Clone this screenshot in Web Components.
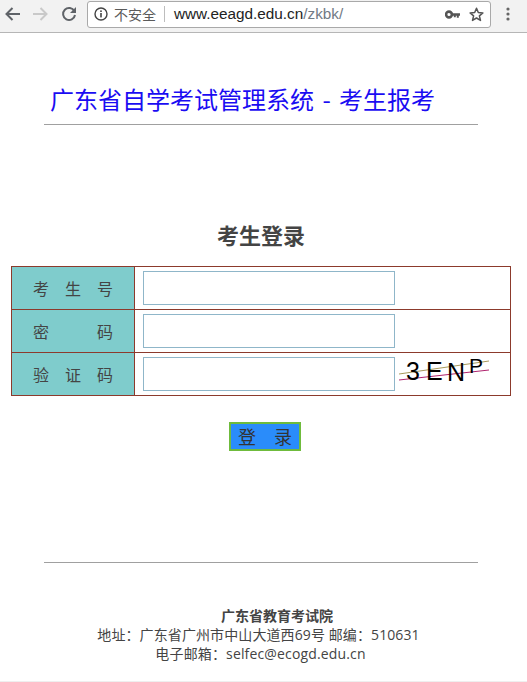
<!DOCTYPE html>
<html lang="zh">
<head>
<meta charset="utf-8">
<title>广东省自学考试管理系统</title>
<style>
  html, body { margin: 0; padding: 0; background: #fff; overflow: hidden; }
  body { font-family: "Noto Sans CJK SC", "Liberation Sans", sans-serif; color: #444; width: 527px; height: 682px; box-sizing: border-box; border-bottom: 1px solid #efefef; }
</style>
</head>
<body>
<browser-bar host-name="www.eeagd.edu.cn" path="/zkbk/"></browser-bar>
<page-header>广东省自学考试管理系统 - 考生报考</page-header>
<login-form>
  <form-row label="考生号"><text-box></text-box></form-row>
  <form-row label="密码"><text-box></text-box></form-row>
  <form-row label="验证码"><text-box></text-box><captcha-image></captcha-image></form-row>
</login-form>
<page-footer></page-footer>

<script>
  class BrowserBar extends HTMLElement{
    constructor(){
      super()
      this.attachShadow({mode:'open'}).innerHTML = `
      <style>
        :host{ display: flex; align-items: center; box-sizing: border-box; height: 33px; background: #f2f2f2; border-bottom: 1px solid #b6b6b6; padding: 0 0 4px 0; }
        svg{ display: block; flex: none; }
        .nav{ display: flex; align-items: center; gap: 11px; padding-left: 4px; width: 87px; box-sizing: border-box; flex: none; }
        .reload{ margin-left: 1px; }
        .omnibox{ display: flex; align-items: center; width: 404px; height: 27px; box-sizing: border-box; background: #fff; border: 1px solid #a9a9a9; border-radius: 3px; font-size: 14px; flex: none; }
        .info{ margin-left: 6px; }
        .warn{ margin-left: 6px; font-size: 14px; color: #5a5a5a; width: 45px; white-space: nowrap; }
        .sep{ width: 1px; height: 16px; background: #bdbdbd; margin: 0 9px 0 5px; flex: none; }
        .url{ flex: 1; font-family: "Liberation Sans", sans-serif; font-size: 15.3px; color: #222; white-space: nowrap; }
        .url span{ color: #717a85; }
        .actions{ display: flex; align-items: center; gap: 9px; padding-right: 6px; }
        .menu{ margin-left: 15px; }
      </style>
      <div class="nav">
        <svg width="17" height="16" viewBox="0 0 17 16"><path d="M16 8H3M8.5 2 2.5 8l6 6" fill="none" stroke="#5f6368" stroke-width="2"/></svg>
        <svg width="17" height="16" viewBox="0 0 17 16"><path d="M1 8h13M8.5 2l6 6-6 6" fill="none" stroke="#c9c9c9" stroke-width="2"/></svg>
        <svg class="reload" width="16" height="16" viewBox="0 0 16 16"><path d="M13.4 5.2A6 6 0 1 0 14 9" fill="none" stroke="#5f6368" stroke-width="2"/><path d="M15 1v6H9z" fill="#5f6368"/></svg>
      </div>
      <div class="omnibox">
        <svg class="info" width="14" height="14" viewBox="0 0 14 14"><circle cx="7" cy="7" r="6" fill="none" stroke="#444" stroke-width="1.4"/><rect x="6.2" y="6" width="1.6" height="4.4" fill="#444"/><rect x="6.2" y="3.4" width="1.6" height="1.6" fill="#444"/></svg>
        <span class="warn">不安全</span>
        <span class="sep"></span>
        <span class="url">${this.getAttribute('host-name')}<span>${this.getAttribute('path')}</span></span>
        <div class="actions">
          <svg width="15" height="9" viewBox="0 0 15 9"><circle cx="4" cy="4.5" r="2.9" fill="none" stroke="#555" stroke-width="2.6"/><path d="M7 3.2h8v2.6h-1.2v2h-2v-2h-1v1.4H8.8V5.8H7z" fill="#555"/></svg>
          <svg width="15" height="15" viewBox="0 0 15 15"><path d="M7.5 1.3 9.3 5.5l4.6.4-3.5 3 1.1 4.5-4-2.4-4 2.4 1.1-4.5-3.5-3 4.6-.4z" fill="none" stroke="#555" stroke-width="1.5" stroke-linejoin="round"/></svg>
        </div>
      </div>
      <svg class="menu" width="4" height="14" viewBox="0 0 4 14"><circle cx="2" cy="2" r="1.6" fill="#666"/><circle cx="2" cy="7" r="1.6" fill="#666"/><circle cx="2" cy="12" r="1.6" fill="#666"/></svg>
      `
    }
  }

  class PageHeader extends HTMLElement{
    constructor(){
      super()
      this.attachShadow({mode:'open'}).innerHTML = `
      <style>
        :host{ display: block; margin: 0 49px 0 44px; padding-top: 48px; height: 43px; border-bottom: 1px solid #a0a0a0; }
        h1{ margin: 0 0 0 6px; font: 400 24px/36px "Noto Sans CJK SC", "Liberation Sans", sans-serif; color: #1a0cf2; white-space: nowrap; word-spacing: 3px; }
      </style>
      <h1><slot></slot></h1>
      `
    }
  }

  class LoginForm extends HTMLElement{
    constructor(){
      super()
      this.attachShadow({mode:'open'}).innerHTML = `
      <style>
        :host{ display: block; padding: 93px 16px 0 11px; }
        h2{ margin: 0 0 16px 0; font: 700 22px/32px "Noto Sans CJK SC", "Liberation Sans", sans-serif; color: #444; text-align: center; }
        .grid{ border: 1px solid #8c3a2c; }
        .btn-row{ display: flex; justify-content: center; margin-top: 26px; padding-left: 8px; }
        button{ width: 72px; height: 29px; padding: 0; box-sizing: border-box; background: #2a8cfa; border: 2px solid #6fbb3c; color: #333; font: 400 18px/25px "Noto Sans CJK SC", sans-serif; white-space: pre; }
      </style>
      <h2>考生登录</h2>
      <div class="grid"><slot></slot></div>
      <div class="btn-row"><button type="button">登　录</button></div>
      `
    }
  }

  class FormRow extends HTMLElement{
    constructor(){
      super()
      const chars = [...this.getAttribute('label')].map( c => `<span>${c}</span>` ).join('')
      this.attachShadow({mode:'open'}).innerHTML = `
      <style>
        :host{ display: grid; grid-template-columns: 123px 1fr; height: 43px; box-sizing: border-box; border-bottom: 1px solid #8c3a2c; }
        :host(:last-child){ border-bottom: 0; height: 42px; }
        .label{ display: flex; justify-content: space-between; align-items: center; padding: 0 21px; background: #7fcccc; border-right: 1px solid #8c3a2c; font-size: 16px; color: #444; }
        .field{ display: flex; align-items: center; padding-left: 8px; }
      </style>
      <div class="label">${chars}</div>
      <div class="field"><slot></slot></div>
      `
    }
  }

  class TextBox extends HTMLElement{
    constructor(){
      super()
      this.attachShadow({mode:'open'}).innerHTML = `
      <style>
        :host{ display: block; flex: none; }
        input{ display: block; width: 252px; height: 34px; box-sizing: border-box; margin: 0; border: 1px solid #8fb6c9; background: #fff; outline: 0; }
      </style>
      <input type="text">
      `
    }
  }

  class CaptchaImage extends HTMLElement{
    constructor(){
      super()
      this.attachShadow({mode:'open'}).innerHTML = `
      <style>
        :host{ display: block; flex: none; margin-left: 3px; }
        svg{ display: block; }
        text{ font-family: "Liberation Sans", sans-serif; font-size: 25px; fill: #000; }
        .small{ font-size: 21px; }
      </style>
      <svg width="94" height="42" viewBox="0 -4 94 42">
        <path d="M1 17 91 4" fill="none" stroke="#a89a5c" stroke-width="1"/>
        <path d="M1 23 91 13" fill="none" stroke="#b0246e" stroke-width="1"/>
        <text x="8" y="23">3</text>
        <text x="28" y="23">E</text>
        <text x="49" y="24">N</text>
        <text class="small" x="71" y="16">P</text>
      </svg>
      `
    }
  }

  class PageFooter extends HTMLElement{
    constructor(){
      super()
      this.attachShadow({mode:'open'}).innerHTML = `
      <style>
        :host{ display: block; margin: 111px 49px 0 44px; border-top: 1px solid #a0a0a0; padding-top: 43px; text-align: center; font-family: "Open Sans", "Noto Sans CJK SC", sans-serif; font-size: 14px; line-height: 19px; color: #444; }
        b{ display: block; padding-left: 32px; }
        .addr{ margin-left: -5px; letter-spacing: .1px; }
        .mail{ letter-spacing: .15px; margin-left: -1px; }
      </style>
      <b>广东省教育考试院</b>
      <div class="addr">地址：广东省广州市中山大道西69号 邮编：510631</div>
      <div class="mail">电子邮箱：selfec@ecogd.edu.cn</div>
      `
    }
  }

  customElements.define('browser-bar', BrowserBar)
  customElements.define('page-header', PageHeader)
  customElements.define('login-form', LoginForm)
  customElements.define('form-row', FormRow)
  customElements.define('text-box', TextBox)
  customElements.define('captcha-image', CaptchaImage)
  customElements.define('page-footer', PageFooter)
</script>
</body>
</html>
